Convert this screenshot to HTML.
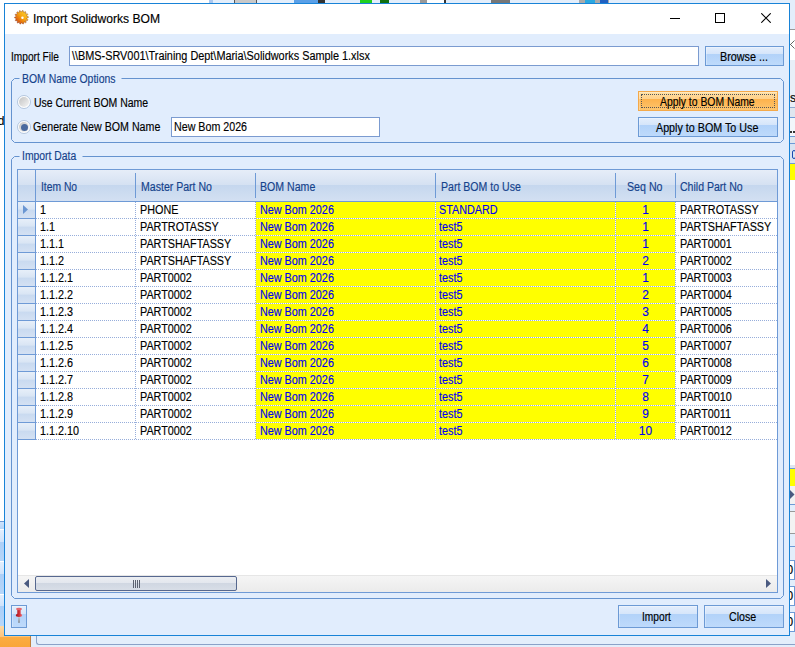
<!DOCTYPE html>
<html><head><meta charset="utf-8">
<style>
*{margin:0;padding:0;box-sizing:border-box}
html,body{width:795px;height:647px;overflow:hidden;background:#fff}
body{position:relative;font-family:"Liberation Sans",sans-serif;font-size:12px;color:#000;-webkit-text-stroke-width:.15px}
div{position:absolute}
svg{position:absolute}
.tx{font-size:12px;line-height:14px;white-space:nowrap;transform-origin:0 0}
.tb{background:#fff;border:1px solid #7b9bd0}
.btn{border:1px solid #6c9ad5;background:linear-gradient(#e4eefc 0%,#d5e5fa 39%,#b2d2f9 40%,#bedafb 100%);box-shadow:inset 1px 1px 0 rgba(255,255,255,.3)}
.grid{left:17px;top:169px;width:761px;height:424px;border:1px solid #6e9ad6;background:#fff}
.hdr{left:18px;top:170px;width:759px;height:32px;background:linear-gradient(#e6edf8 0%,#d5e1f2 48%,#c5d7ee 49%,#d3e0f2 100%);border-bottom:1px solid #6e9ad6}
.hs{top:173px;width:1px;height:25px;background:#6e9ad6}
.rh{left:18px;width:17px;height:17px;border-bottom:1px solid #6e9ad6;background:linear-gradient(#e7eff9 0%,#d9e5f4 45%,#c9daf0 50%,#d4e1f3 100%)}
.rhcol{left:35px;top:170px;width:1px;height:270px;background:#6e9ad6}
.yel{height:16px;background:#ffff00}
.hd{left:36px;width:741px;height:1px;background:repeating-linear-gradient(90deg,#97aedb 0 1px,#fff 1px 2px)}
.vd{top:202px;width:1px;height:238px;background:repeating-linear-gradient(180deg,#97aedb 0 1px,#fff 1px 2px)}
.d{font-size:12px;line-height:14px;white-space:nowrap;transform:scaleX(0.9006);transform-origin:0 0}
.y{color:#0000f0}
.c{text-align:center;transform:none}
.sb{left:18px;top:575px;width:759px;height:17px;background:linear-gradient(#f5f5f5,#ebebeb);border-top:1px solid #e6e6e6}
.thumb{left:35px;top:576px;width:202px;height:15px;border:1px solid #56688f;border-radius:2px;background:linear-gradient(#eceef2 0%,#e3e7ee 45%,#d0d7e2 50%,#d8dee7 100%)}
.rs{left:790px;width:5px}
</style></head><body>
<!-- background: top strip -->
<div style="left:209px;top:0;width:586px;height:3px;background:#e3eefb"></div>
<div style="left:209px;top:0;width:4px;height:3px;background:#a9c8f0"></div>
<div style="left:234px;top:0;width:23px;height:3px;background:#c8c8c8;border-left:1px solid #555;border-right:1px solid #555"></div>
<div style="left:294px;top:0;width:31px;height:3px;background:#5aa0e8"></div>
<div style="left:318px;top:0;width:7px;height:3px;background:#333"></div>
<div style="left:360px;top:0;width:12px;height:3px;background:#20d020"></div>
<div style="left:380px;top:0;width:9px;height:3px;background:#107010"></div>
<div style="left:420px;top:0;width:7px;height:3px;background:#999"></div>
<div style="left:427px;top:0;width:17px;height:3px;background:#fff"></div>
<div style="left:444px;top:0;width:2px;height:3px;background:#333"></div>
<div style="left:491px;top:0;width:19px;height:3px;background:#777"></div>
<div style="left:579px;top:0;width:30px;height:3px;background:#aaa"></div>
<div style="left:585px;top:0;width:10px;height:3px;background:#2aa8e0"></div>
<div style="left:600px;top:0;width:8px;height:3px;background:#2060c0"></div>
<!-- right strip -->
<div class="rs" style="top:0;height:29px;background:#e3eefb"></div>
<div class="rs" style="top:29px;height:1px;background:#999"></div>
<div class="rs" style="top:30px;height:30px;background:#fff"></div>
<svg style="left:786px;top:40px" width="9" height="9"><path d="M0.5 0.5L8.5 8.5M8.5 0.5L0.5 8.5" stroke="#666" stroke-width="1"/></svg>
<div class="rs" style="top:60px;height:47px;background:#e8eff8"></div>
<div style="left:790px;top:91.5px;font-size:12px;line-height:12px;">s</div>
<div class="rs" style="top:107px;height:1px;background:#8fa9d0"></div>
<div class="rs" style="top:108px;height:9px;background:#dfe6ef"></div>
<div class="rs" style="top:117px;height:1px;background:#6e9ad6"></div>
<div class="rs" style="top:118px;height:18px;background:#f2f6fb"></div>
<div style="left:790px;top:131px;width:5px;height:2px;background:repeating-linear-gradient(90deg,#333 0 2px,transparent 2px 3px)"></div>
<div class="rs" style="top:136px;height:1px;background:#6e9ad6"></div>
<div class="rs" style="top:137px;height:6px;background:#dfe6ef"></div>
<div class="rs" style="top:143px;height:1px;background:#6e9ad6"></div>
<div class="rs" style="top:144px;height:19px;background:#d9e4f2"></div>
<div style="left:792px;top:150px;width:4px;height:9px;border:1px solid #1a4ab0;border-radius:2px"></div>
<div class="rs" style="top:163px;height:1px;background:#6e9ad6"></div>
<div class="rs" style="top:164px;height:16px;background:#ffff00"></div>
<div class="rs" style="top:465px;height:3px;background:#dfe6ef"></div>
<div class="rs" style="top:468px;height:1px;background:#6e9ad6"></div>
<div class="rs" style="top:469px;height:17px;background:#ffff00"></div>
<div class="rs" style="top:486px;height:18px;background:#f2f2f2"></div>
<svg style="left:790px;top:490px" width="5" height="9"><path d="M0 0V9L4.5 4.5Z" fill="#4a5a80"/></svg>
<div class="rs" style="top:504px;height:1px;background:#6e9ad6"></div>
<div class="rs" style="top:505px;height:6px;background:#e3eefb"></div>
<div class="rs" style="top:511px;height:1px;background:#999"></div>
<div class="rs" style="top:512px;height:21px;background:#f3f3f3"></div>
<div class="rs" style="top:533px;height:1px;background:#999"></div>
<div class="rs" style="top:534px;height:12px;background:#e3eefb"></div>
<div class="rs" style="top:546px;height:1px;background:#6e9ad6"></div>
<div class="rs" style="top:547px;height:89px;background:#e3eefb"></div>
<div style="left:789px;top:560px;width:6px;height:20px;background:#fff;border-top:1px solid #6e9ad6;border-bottom:1px solid #6e9ad6;border-right:1px solid #6e9ad6"></div>
<div style="left:789px;top:586px;width:6px;height:20px;background:#fff;border-top:1px solid #6e9ad6;border-bottom:1px solid #6e9ad6;border-right:1px solid #6e9ad6"></div>
<div style="left:789px;top:612px;width:6px;height:20px;background:#fff;border-top:1px solid #6e9ad6;border-bottom:1px solid #6e9ad6;border-right:1px solid #6e9ad6"></div>
<div style="left:786.5px;top:563px;font-size:12px;line-height:14px;color:#000;">0</div>
<div style="left:786.5px;top:589px;font-size:12px;line-height:14px;color:#000;">0</div>
<div style="left:786.5px;top:615px;font-size:12px;line-height:14px;color:#000;">0</div>
<!-- bottom strip -->
<div style="left:0;top:636px;width:795px;height:11px;background:#e3eefb"></div>
<div style="left:36px;top:636px;width:759px;height:9px;border-left:1px solid #8aa2c8;border-bottom:1px solid #8aa2c8;border-bottom-left-radius:3px"></div>
<div style="left:0;top:626px;width:31px;height:21px;background:linear-gradient(#fdd9a6 0,#fcc47e 50%,#fbac42 55%,#f9a63a 100%)"></div>
<div style="left:30px;top:636px;width:1px;height:11px;background:#c08040"></div>
<!-- left strip -->
<div style="left:0;top:521px;width:4px;height:1px;background:#6e9ad6"></div>
<div style="left:0;top:522px;width:4px;height:7px;background:linear-gradient(#cfe3fb,#b7d6f9)"></div>
<div style="left:0;top:529px;width:4px;height:1px;background:#fff"></div>
<div style="left:0;top:530px;width:4px;height:31px;background:linear-gradient(#e2eefd 0,#cfe3fb 38%,#abcff8 39%,#b6d6f9 100%)"></div>
<div style="left:0;top:561px;width:4px;height:1px;background:#fff"></div>
<div style="left:0;top:562px;width:4px;height:32px;background:linear-gradient(#e2eefd 0,#cfe3fb 37%,#abcff8 38%,#b6d6f9 100%)"></div>
<div style="left:0;top:594px;width:4px;height:1px;background:#fff"></div>
<div style="left:0;top:595px;width:4px;height:31px;background:linear-gradient(#e2eefd 0,#cfe3fb 36%,#abcff8 37%,#b6d6f9 100%)"></div>
<div style="left:-2.2px;top:114px;font-size:12px;line-height:14px">d</div>

<!-- window -->
<div style="left:4px;top:3px;width:786px;height:633px;border:1px solid #1883d7;background:#e1edfd"></div>
<div style="left:5px;top:4px;width:784px;height:30px;background:#fff"></div>
<svg style="left:13px;top:9px" width="17" height="17" viewBox="-0.9 -0.7 17.8 17.8">
<defs><linearGradient id="gg" x1="1" y1="0" x2="0" y2="1"><stop offset="0" stop-color="#ffe23a"/><stop offset=".45" stop-color="#f8a812"/><stop offset="1" stop-color="#d02c08"/></linearGradient></defs>
<path d="M8.00 2.40L8.97 0.87L9.76 1.02L10.08 2.80L10.43 2.95L11.97 1.99L12.61 2.47L12.13 4.22L12.38 4.51L14.18 4.31L14.56 5.02L13.36 6.39L13.46 6.75L15.17 7.350L15.20 8.16L13.53 8.88L13.46 9.25L14.74 10.53L14.42 11.27L12.60 11.19L12.38 11.49L12.98 13.20L12.36 13.73L10.76 12.87L10.43 13.05L10.22 14.85L9.44 15.05L8.38 13.59L8.00 13.60L7.03 15.13L6.24 14.98L5.92 13.20L5.57 13.05L4.03 14.01L3.39 13.53L3.87 11.78L3.62 11.490L1.82 11.69L1.44 10.98L2.64 9.61L2.54 9.25L0.83 8.65L0.80 7.84L2.47 7.12L2.54 6.75L1.26 5.47L1.58 4.73L3.40 4.81L3.62 4.51L3.02 2.80L3.64 2.27L5.24 3.13L5.57 2.95L5.78 1.15L6.56 0.95L7.62 2.41Z" fill="url(#gg)" stroke="#803010" stroke-width=".6" stroke-opacity=".75"/>
<circle cx="9" cy="8.5" r="1.3" fill="#fff"/>
</svg>
<div style="left:670px;top:18px;width:10px;height:1px;background:#000"></div>
<div style="left:715px;top:13px;width:10px;height:10px;border:1px solid #000"></div>
<svg style="left:761px;top:13px" width="10" height="10" viewBox="0 0 10 10"><path d="M0.3 0.3L9.7 9.7M9.7 0.3L0.3 9.7" stroke="#000" stroke-width="1.1"/></svg>

<div class="tb" style="left:69px;top:46px;width:630px;height:20px"></div>
<div class="btn" style="left:705px;top:46px;width:79px;height:20px"></div>

<svg style="left:0;top:0" width="795" height="647">
<g fill="none" stroke="#6593cf" stroke-width="1">
<path d="M19.5 78.5H14.5L11.5 81.5V139.5L14.5 142.5H780.5L783.5 139.5V81.5L780.5 78.5H121.5"/>
<path d="M19.5 156.5H14.5L11.5 159.5V595.5L14.5 598.5H780.5L783.5 595.5V159.5L780.5 156.5H82.5"/>
</g>
</svg>
<div style="left:17px;top:95px;width:14px;height:14px;border-radius:50%;border:1px solid #b3c6de;background:#fff"></div>
<div style="left:19px;top:97px;width:10px;height:10px;border-radius:50%;background:linear-gradient(135deg,#c2c2c2,#f6f6f6)"></div>
<div style="left:17px;top:120px;width:14px;height:14px;border-radius:50%;border:1px solid #b3c6de;background:#fff"></div>
<div style="left:19px;top:122px;width:10px;height:10px;border-radius:50%;background:linear-gradient(135deg,#c2c2c2,#f6f6f6)"></div>
<div style="left:20.5px;top:123.5px;width:7px;height:7px;border-radius:50%;background:#4a6a9e"></div>
<div class="tb" style="left:171px;top:117px;width:209px;height:20px"></div>
<div class="btn" style="left:638px;top:91px;width:140px;height:20px;border-color:#f4a94a;background:linear-gradient(#ffe0a4 0%,#ffd089 39%,#fdb24c 40%,#fdc56e 100%)"></div>
<div style="left:641px;top:94px;width:134px;height:14px;border:1px dotted #555"></div>
<div class="btn" style="left:638px;top:117px;width:140px;height:20px"></div>

<div class="grid"></div>
<div class="hdr"></div>
<div class="rhcol"></div>
<div class="hs" style="left:135px"></div>
<div class="hs" style="left:255px"></div>
<div class="hs" style="left:435px"></div>
<div class="hs" style="left:615px"></div>
<div class="hs" style="left:675px"></div>
<div class="rh" style="top:202px"></div>
<div class="yel" style="left:256px;top:202px;width:419px"></div>
<div class="hd" style="top:218px"></div>
<div class="rh" style="top:219px"></div>
<div class="yel" style="left:256px;top:219px;width:419px"></div>
<div class="hd" style="top:235px"></div>
<div class="rh" style="top:236px"></div>
<div class="yel" style="left:256px;top:236px;width:419px"></div>
<div class="hd" style="top:252px"></div>
<div class="rh" style="top:253px"></div>
<div class="yel" style="left:256px;top:253px;width:419px"></div>
<div class="hd" style="top:269px"></div>
<div class="rh" style="top:270px"></div>
<div class="yel" style="left:256px;top:270px;width:419px"></div>
<div class="hd" style="top:286px"></div>
<div class="rh" style="top:287px"></div>
<div class="yel" style="left:256px;top:287px;width:419px"></div>
<div class="hd" style="top:303px"></div>
<div class="rh" style="top:304px"></div>
<div class="yel" style="left:256px;top:304px;width:419px"></div>
<div class="hd" style="top:320px"></div>
<div class="rh" style="top:321px"></div>
<div class="yel" style="left:256px;top:321px;width:419px"></div>
<div class="hd" style="top:337px"></div>
<div class="rh" style="top:338px"></div>
<div class="yel" style="left:256px;top:338px;width:419px"></div>
<div class="hd" style="top:354px"></div>
<div class="rh" style="top:355px"></div>
<div class="yel" style="left:256px;top:355px;width:419px"></div>
<div class="hd" style="top:371px"></div>
<div class="rh" style="top:372px"></div>
<div class="yel" style="left:256px;top:372px;width:419px"></div>
<div class="hd" style="top:388px"></div>
<div class="rh" style="top:389px"></div>
<div class="yel" style="left:256px;top:389px;width:419px"></div>
<div class="hd" style="top:405px"></div>
<div class="rh" style="top:406px"></div>
<div class="yel" style="left:256px;top:406px;width:419px"></div>
<div class="hd" style="top:422px"></div>
<div class="rh" style="top:423px"></div>
<div class="yel" style="left:256px;top:423px;width:419px"></div>
<div class="hd" style="top:439px"></div>
<div class="vd" style="left:135px"></div>
<div class="vd" style="left:255px"></div>
<div class="vd" style="left:435px"></div>
<div class="vd" style="left:615px"></div>
<div class="vd" style="left:675px"></div>
<div class="d" style="left:40px;top:203px">1</div>
<div class="d" style="left:140px;top:203px">PHONE</div>
<div class="d y" style="left:259.5px;top:203px">New Bom 2026</div>
<div class="d y" style="left:439px;top:203px">STANDARD</div>
<div class="d" style="left:680px;top:203px">PARTROTASSY</div>
<div class="d y c" style="left:616px;width:59px;top:203px">1</div>
<div class="d" style="left:40px;top:220px">1.1</div>
<div class="d" style="left:140px;top:220px">PARTROTASSY</div>
<div class="d y" style="left:259.5px;top:220px">New Bom 2026</div>
<div class="d y" style="left:439px;top:220px">test5</div>
<div class="d" style="left:680px;top:220px">PARTSHAFTASSY</div>
<div class="d y c" style="left:616px;width:59px;top:220px">1</div>
<div class="d" style="left:40px;top:237px">1.1.1</div>
<div class="d" style="left:140px;top:237px">PARTSHAFTASSY</div>
<div class="d y" style="left:259.5px;top:237px">New Bom 2026</div>
<div class="d y" style="left:439px;top:237px">test5</div>
<div class="d" style="left:680px;top:237px">PART0001</div>
<div class="d y c" style="left:616px;width:59px;top:237px">1</div>
<div class="d" style="left:40px;top:254px">1.1.2</div>
<div class="d" style="left:140px;top:254px">PARTSHAFTASSY</div>
<div class="d y" style="left:259.5px;top:254px">New Bom 2026</div>
<div class="d y" style="left:439px;top:254px">test5</div>
<div class="d" style="left:680px;top:254px">PART0002</div>
<div class="d y c" style="left:616px;width:59px;top:254px">2</div>
<div class="d" style="left:40px;top:271px">1.1.2.1</div>
<div class="d" style="left:140px;top:271px">PART0002</div>
<div class="d y" style="left:259.5px;top:271px">New Bom 2026</div>
<div class="d y" style="left:439px;top:271px">test5</div>
<div class="d" style="left:680px;top:271px">PART0003</div>
<div class="d y c" style="left:616px;width:59px;top:271px">1</div>
<div class="d" style="left:40px;top:288px">1.1.2.2</div>
<div class="d" style="left:140px;top:288px">PART0002</div>
<div class="d y" style="left:259.5px;top:288px">New Bom 2026</div>
<div class="d y" style="left:439px;top:288px">test5</div>
<div class="d" style="left:680px;top:288px">PART0004</div>
<div class="d y c" style="left:616px;width:59px;top:288px">2</div>
<div class="d" style="left:40px;top:305px">1.1.2.3</div>
<div class="d" style="left:140px;top:305px">PART0002</div>
<div class="d y" style="left:259.5px;top:305px">New Bom 2026</div>
<div class="d y" style="left:439px;top:305px">test5</div>
<div class="d" style="left:680px;top:305px">PART0005</div>
<div class="d y c" style="left:616px;width:59px;top:305px">3</div>
<div class="d" style="left:40px;top:322px">1.1.2.4</div>
<div class="d" style="left:140px;top:322px">PART0002</div>
<div class="d y" style="left:259.5px;top:322px">New Bom 2026</div>
<div class="d y" style="left:439px;top:322px">test5</div>
<div class="d" style="left:680px;top:322px">PART0006</div>
<div class="d y c" style="left:616px;width:59px;top:322px">4</div>
<div class="d" style="left:40px;top:339px">1.1.2.5</div>
<div class="d" style="left:140px;top:339px">PART0002</div>
<div class="d y" style="left:259.5px;top:339px">New Bom 2026</div>
<div class="d y" style="left:439px;top:339px">test5</div>
<div class="d" style="left:680px;top:339px">PART0007</div>
<div class="d y c" style="left:616px;width:59px;top:339px">5</div>
<div class="d" style="left:40px;top:356px">1.1.2.6</div>
<div class="d" style="left:140px;top:356px">PART0002</div>
<div class="d y" style="left:259.5px;top:356px">New Bom 2026</div>
<div class="d y" style="left:439px;top:356px">test5</div>
<div class="d" style="left:680px;top:356px">PART0008</div>
<div class="d y c" style="left:616px;width:59px;top:356px">6</div>
<div class="d" style="left:40px;top:373px">1.1.2.7</div>
<div class="d" style="left:140px;top:373px">PART0002</div>
<div class="d y" style="left:259.5px;top:373px">New Bom 2026</div>
<div class="d y" style="left:439px;top:373px">test5</div>
<div class="d" style="left:680px;top:373px">PART0009</div>
<div class="d y c" style="left:616px;width:59px;top:373px">7</div>
<div class="d" style="left:40px;top:390px">1.1.2.8</div>
<div class="d" style="left:140px;top:390px">PART0002</div>
<div class="d y" style="left:259.5px;top:390px">New Bom 2026</div>
<div class="d y" style="left:439px;top:390px">test5</div>
<div class="d" style="left:680px;top:390px">PART0010</div>
<div class="d y c" style="left:616px;width:59px;top:390px">8</div>
<div class="d" style="left:40px;top:407px">1.1.2.9</div>
<div class="d" style="left:140px;top:407px">PART0002</div>
<div class="d y" style="left:259.5px;top:407px">New Bom 2026</div>
<div class="d y" style="left:439px;top:407px">test5</div>
<div class="d" style="left:680px;top:407px">PART0011</div>
<div class="d y c" style="left:616px;width:59px;top:407px">9</div>
<div class="d" style="left:40px;top:424px">1.1.2.10</div>
<div class="d" style="left:140px;top:424px">PART0002</div>
<div class="d y" style="left:259.5px;top:424px">New Bom 2026</div>
<div class="d y" style="left:439px;top:424px">test5</div>
<div class="d" style="left:680px;top:424px">PART0012</div>
<div class="d y c" style="left:616px;width:59px;top:424px">10</div>
<svg style="left:23px;top:205px" width="6" height="10"><path d="M0 0V9L5 4.5Z" fill="#6a96d2"/></svg>
<div class="sb"></div>
<svg style="left:24px;top:579px" width="6" height="10"><path d="M5 0V9L0 4.5Z" fill="#4a5a80"/></svg>
<svg style="left:766px;top:579px" width="6" height="10"><path d="M0 0V9L5 4.5Z" fill="#4a5a80"/></svg>
<div class="thumb"></div>
<div style="left:133px;top:580px;width:7px;height:8px;background:repeating-linear-gradient(90deg,#5c6270 0 1px,transparent 1px 2px)"></div>

<div class="btn" style="left:11px;top:605px;width:16px;height:23px"></div>
<svg style="left:13px;top:607px" width="12" height="18" viewBox="0 0 12 18">
<defs><linearGradient id="pg" x1="0" y1="0" x2="1" y2="0"><stop offset="0" stop-color="#a01018"/><stop offset=".6" stop-color="#d8343c"/><stop offset="1" stop-color="#e87a80"/></linearGradient>
<linearGradient id="ng" x1="0" y1="0" x2="0" y2="1"><stop offset="0" stop-color="#c8ccd2"/><stop offset="1" stop-color="#7c828a"/></linearGradient></defs>
<rect x="5.2" y="9.5" width="1.6" height="6.3" fill="url(#ng)"/>
<path d="M4.3 2.2H7.7V6.8Q9.2 7.6 9.2 8.6Q9.2 10 6 10Q2.8 10 2.8 8.6Q2.8 7.6 4.3 6.8Z" fill="url(#pg)"/>
<ellipse cx="6" cy="2" rx="3" ry="1.2" fill="#e4666c"/>
</svg>
<div class="btn" style="left:618px;top:605px;width:80px;height:23px"></div>
<div class="btn" style="left:704px;top:605px;width:80px;height:23px"></div>
<div class="tx" style="left:32.99px;top:12px;color:#000;transform:scaleX(1.0081)">Import Solidworks BOM</div>
<div class="tx" style="left:10.56px;top:50px;color:#000;transform:scaleX(0.8436)">Import File</div>
<div class="tx" style="left:72.00px;top:49px;color:#000;transform:scaleX(0.9058)">\\BMS-SRV001\Training Dept\Maria\Solidworks Sample 1.xlsx</div>
<div class="tx" style="left:719.50px;top:50px;color:#000;transform:scaleX(0.8980)">Browse ...</div>
<div class="tx" style="left:21.83px;top:72px;color:#15428b;transform:scaleX(0.8708)">BOM Name Options</div>
<div class="tx" style="left:33.53px;top:96px;color:#000;transform:scaleX(0.8736)">Use Current BOM Name</div>
<div class="tx" style="left:33.01px;top:120px;color:#000;transform:scaleX(0.8880)">Generate New BOM Name</div>
<div class="tx" style="left:173.61px;top:120px;color:#000;transform:scaleX(0.8901)">New Bom 2026</div>
<div class="tx" style="left:659.60px;top:95px;color:#000;transform:scaleX(0.8651)">Apply to BOM Name</div>
<div class="tx" style="left:655.80px;top:121px;color:#000;transform:scaleX(0.8939)">Apply to BOM To Use</div>
<div class="tx" style="left:21.64px;top:149px;color:#15428b;transform:scaleX(0.8645)">Import Data</div>
<div class="tx" style="left:40.74px;top:180px;color:#15428b;transform:scaleX(0.8585)">Item No</div>
<div class="tx" style="left:140.62px;top:180px;color:#15428b;transform:scaleX(0.8797)">Master Part No</div>
<div class="tx" style="left:260.42px;top:180px;color:#15428b;transform:scaleX(0.8820)">BOM Name</div>
<div class="tx" style="left:440.62px;top:180px;color:#15428b;transform:scaleX(0.8798)">Part BOM to Use</div>
<div class="tx" style="left:626.61px;top:180px;color:#15428b;transform:scaleX(0.8872)">Seq No</div>
<div class="tx" style="left:679.82px;top:180px;color:#15428b;transform:scaleX(0.8786)">Child Part No</div>
<div class="tx" style="left:642.15px;top:610px;color:#000;transform:scaleX(0.8485)">Import</div>
<div class="tx" style="left:728.92px;top:610px;color:#000;transform:scaleX(0.8828)">Close</div>
</body></html>
